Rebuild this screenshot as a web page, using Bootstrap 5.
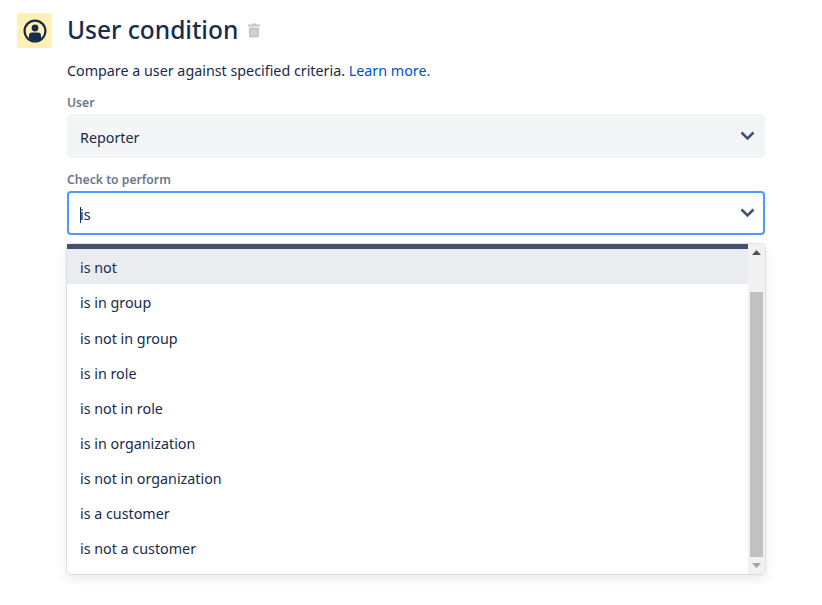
<!DOCTYPE html>
<html lang="en">

<head>
  <meta charset="UTF-8" />
  <meta name="viewport" content="width=device-width, initial-scale=1.0" />
  <title>User condition</title>
  <link href="https://cdn.jsdelivr.net/npm/bootstrap@5.3.0/dist/css/bootstrap.min.css" rel="stylesheet" />
  <script src="https://cdn.jsdelivr.net/npm/bootstrap@5.3.0/dist/js/bootstrap.bundle.min.js"></script>
  <style>
    html,
    body {
      height: 100%;
    }

    body {
      font-family: "Noto Sans", "Open Sans", sans-serif;
      color: #172b4d;
      background: #fff;
      font-size: 14.3px;
    }

    .page-wrap {
      width: 765px;
      margin-left: 17px;
      padding-top: 13px;
    }

    .icon-box {
      width: 35px;
      height: 35px;
      background: #fff0b3;
      border-radius: 3px;
    }

    .form-col {
      margin-left: 15px;
      width: 698px;
    }

    .cond-title {
      font-size: 24.5px;
      line-height: 34px;
      font-weight: 500;
      margin: 0;
      color: #172b4d;
    }

    .cond-desc {
      margin: 14px 0 0;
      line-height: 20px;
      height: 20px;
    }

    .cond-desc a {
      color: #0052cc;
      text-decoration: none;
    }

    .field-label {
      display: block;
      font-size: 12.2px;
      line-height: 16px;
      font-weight: 600;
      color: #6b778c;
      margin: 14px 0 3px;
    }

    .fake-select {
      height: 44px;
      border-radius: 4px;
      background: #f4f5f7;
      padding: 3px 10px 0 13px;
    }

    .fake-select.is-focus {
      background: #fff;
      border: 2px solid #4c9aff;
      padding: 3px 8px 0 11px;
    }

    .fake-select svg {
      margin-top: -3px;
    }

    .caret-bar {
      width: 1px;
      height: 16px;
      background: #172b4d;
      margin-right: -1px;
    }

    .option-menu {
      height: 330px;
      margin-top: 9px;
      background: #fff;
      border-radius: 4px;
      box-shadow: 0 0 0 1px rgba(9, 30, 66, .1), 0 4px 11px rgba(9, 30, 66, .1);
    }

    .option-list {
      border-top: 5px solid #42526e;
    }

    .option-row {
      height: 35.1px;
      padding: 3px 0 0 13px;
    }

    .option-row.is-hover {
      background: #ebecf0;
    }

    .scroll-rail {
      width: 17px;
      background: #f1f1f1;
      border-radius: 0 4px 4px 0;
    }

    .scroll-btn {
      height: 17px;
    }

    .scroll-thumb {
      height: 265px;
      margin: 31px 2px 0;
      background: #c1c1c1;
    }
  </style>
</head>

<body>
  <div class="page-wrap d-flex align-items-start">
    <div class="icon-box d-flex align-items-center justify-content-center flex-shrink-0">
      <svg width="24" height="24" viewBox="0 0 24 24">
        <circle cx="12" cy="12" r="10.4" fill="none" stroke="#172b4d" stroke-width="2.2" />
        <circle cx="12" cy="9" r="3.400" fill="#172b4d" />
        <path d="M6 19.500v-3a3 3 0 0 1 3-3h6a3 3 0 0 1 3 3v3a10 10 0 0 1-12 0z" fill="#172b4d" />
      </svg>
    </div>
    <div class="form-col">
      <div class="d-flex align-items-center gap-2">
        <h1 class="cond-title">User condition</h1>
        <svg width="16" height="16" viewBox="0 0 16 16">
          <path d="M6 1.500h4l.5 1H14v2H2v-2h3.500z" fill="#c1c7d0" />
          <path d="M3 5.500h10V14a1.500 1.500 0 0 1-1.500 1.500h-7A1.500 1.500 0 0 1 3 14z" fill="#c1c7d0" />
          <path d="M6 7.500v6M8 7.500v6M10 7.500v6" stroke="#dfe1e6" stroke-width=".8" />
        </svg>
      </div>
      <p class="cond-desc">Compare a user against specified criteria. <a href="#">Learn more.</a></p>

      <label class="field-label">User</label>
      <div class="fake-select d-flex align-items-center justify-content-between">
        <span>Reporter</span>
        <svg width="15" height="10" viewBox="0 0 15 10"><path d="M1.500 1.500 7.500 7.500l6-6" fill="none" stroke="#42526e" stroke-width="2.600" /></svg>
      </div>

      <label class="field-label">Check to perform</label>
      <div class="fake-select is-focus d-flex align-items-center justify-content-between">
        <span class="d-flex align-items-center"><span class="caret-bar"></span>is</span>
        <svg width="15" height="10" viewBox="0 0 15 10"><path d="M1.500 1.500 7.500 7.500l6-6" fill="none" stroke="#42526e" stroke-width="2.600" /></svg>
      </div>

      <div class="option-menu d-flex">
        <div class="option-list flex-grow-1">
          <div class="option-row is-hover d-flex align-items-center">is not</div>
          <div class="option-row d-flex align-items-center">is in group</div>
          <div class="option-row d-flex align-items-center">is not in group</div>
          <div class="option-row d-flex align-items-center">is in role</div>
          <div class="option-row d-flex align-items-center">is not in role</div>
          <div class="option-row d-flex align-items-center">is in organization</div>
          <div class="option-row d-flex align-items-center">is not in organization</div>
          <div class="option-row d-flex align-items-center">is a customer</div>
          <div class="option-row d-flex align-items-center">is not a customer</div>
        </div>
        <div class="scroll-rail d-flex flex-column justify-content-between">
          <div>
            <div class="scroll-btn d-flex align-items-center justify-content-center">
              <svg width="9" height="5" viewBox="0 0 9 5"><path d="M4.500 0 9 5H0z" fill="#505050" /></svg>
            </div>
            <div class="scroll-thumb"></div>
          </div>
          <div class="scroll-btn d-flex align-items-center justify-content-center">
            <svg width="9" height="5" viewBox="0 0 9 5"><path d="M0 0h9L4.500 5z" fill="#a3a3a3" /></svg>
          </div>
        </div>
      </div>
    </div>
  </div>
</body>

</html>
